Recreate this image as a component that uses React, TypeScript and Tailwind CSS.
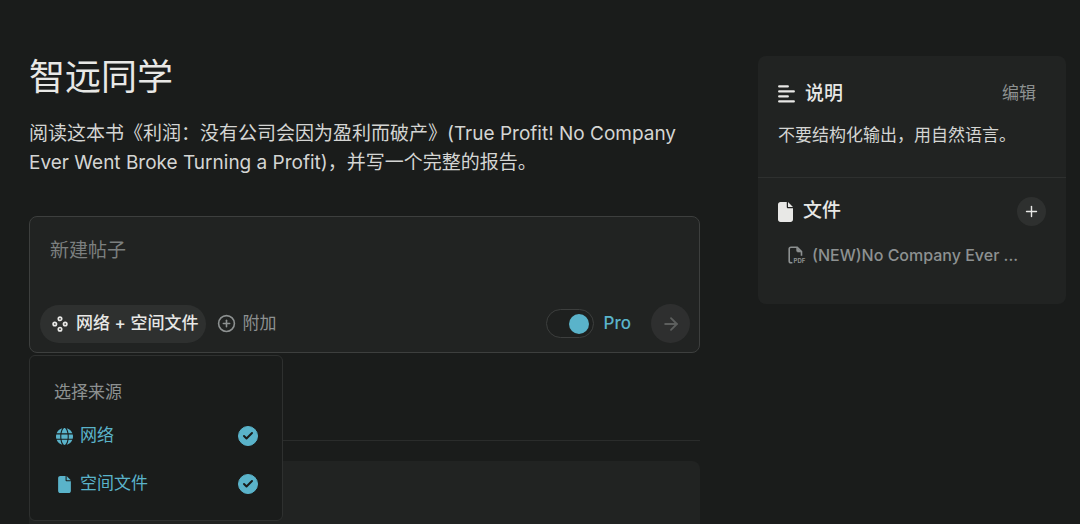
import React, { useState } from 'react';
import { ArrowRight, Check, CirclePlus, Plus } from 'lucide-react';
import { FaFile, FaGlobe } from 'react-icons/fa6';

interface Source {
  id: string;
  label: string;
  icon: React.ReactNode;
}

const SOURCES: Source[] = [
  { id: 'web', label: '网络', icon: <FaGlobe className="w-[17px] h-[17px]" /> },
  { id: 'files', label: '空间文件', icon: <FaFile className="w-[17px] h-[17px]" /> },
];

const FocusIcon: React.FC = () => (
  <svg className="w-4 h-4" viewBox="0 0 16 16" fill="none" stroke="currentColor" strokeWidth="1.7">
    <circle cx="8" cy="2.8" r="1.7" />
    <circle cx="2.8" cy="8" r="1.7" />
    <circle cx="13.2" cy="8" r="1.7" />
    <circle cx="8" cy="13.2" r="1.7" />
  </svg>
);

const LinesIcon: React.FC = () => (
  <svg className="w-[17px] h-[18px]" viewBox="0 0 17 18" fill="none" stroke="currentColor" strokeWidth="2.3" strokeLinecap="round">
    <path d="M1.2 1.4h8.6M1.2 6.4h14.6M1.2 11.4h8.6M1.2 16.4h14.6" />
  </svg>
);

const PdfIcon: React.FC = () => (
  <svg className="w-[18px] h-[18px] shrink-0" viewBox="0 0 18 18" fill="none" stroke="currentColor" strokeWidth="1.6">
    <path d="M4.4 16.7H3a1.8 1.8 0 0 1-1.8-1.8V3A1.8 1.8 0 0 1 3 1.2h6.2l4.3 4.3v4.2" />
    <path d="M8.6 1.4v3.2a1.4 1.4 0 0 0 1.4 1.4h3.2z" fill="currentColor" strokeWidth="0.6" />
    <text
      x="5.6"
      y="17.2"
      fontSize="6"
      fontWeight="700"
      fill="currentColor"
      stroke="none"
      fontFamily="Inter, sans-serif"
    >
      PDF
    </text>
  </svg>
);

const SourceOption: React.FC<{ source: Source; checked: boolean; onToggle: () => void }> = ({ source, checked, onToggle }) => (
  <label className="flex items-center h-12 pl-[26px] pr-6 gap-[7px] cursor-pointer text-[#5ab3ca]">
    {source.icon}
    <span className="flex-1 text-[17px]">{source.label}</span>
    <span className="grid place-items-center">
      <input
        type="checkbox"
        checked={checked}
        onChange={onToggle}
        className="col-start-1 row-start-1 appearance-none w-5 h-5 rounded-full border border-[#5ab3ca] checked:bg-[#5ab3ca]"
      />
      {checked && <Check className="col-start-1 row-start-1 w-3 h-3 text-[#1a1c1b] pointer-events-none" strokeWidth={4} />}
    </span>
  </label>
);

const Composer: React.FC = () => {
  const [pro, setPro] = useState(true);
  const [selected, setSelected] = useState<string[]>(['web', 'files']);

  const toggle = (id: string) =>
    setSelected((prev) => (prev.includes(id) ? prev.filter((s) => s !== id) : [...prev, id]));

  return (
    <div className="relative mt-[39px]">
      <div className="rounded-lg border border-[#3d3f3e] bg-[#212322] pt-5 pl-[10px] pr-[9px] pb-[9px]">
        <textarea
          aria-label="新建帖子"
          placeholder="新建帖子"
          rows={1}
          className="block w-full h-[67px] px-[10px] resize-none bg-transparent outline-none text-[19px] leading-7 text-[#e8e8e6] placeholder:text-[#7b7f7f]"
        />
        <div className="flex items-center">
          <button className="flex items-center gap-2 h-[38px] pl-3 pr-2 rounded-full bg-[#2e302f] text-[17px] font-medium text-[#e8e8e6]">
            <FocusIcon />
            网络 + 空间文件
          </button>
          <button className="flex items-center gap-[6px] ml-[11px] text-[17px] text-[#8d9191]">
            <CirclePlus className="w-[19px] h-[19px]" strokeWidth={2} />
            附加
          </button>
          <label className="flex items-center gap-[10px] ml-auto text-[17px] font-medium text-[#5ab3ca] cursor-pointer">
            <input
              type="checkbox"
              role="switch"
              checked={pro}
              onChange={() => setPro(!pro)}
              className="appearance-none flex items-center w-12 h-[29px] px-1 rounded-full border border-[#3d3f3e] bg-[#1e201f] before:block before:w-5 before:h-5 before:rounded-full before:bg-[#8d9191] checked:justify-end checked:before:bg-[#5ab3ca]"
            />
            Pro
          </label>
          <button aria-label="提交" className="grid place-items-center w-[39px] h-[39px] ml-5 rounded-full bg-[#2e2f2f] text-[#5d5f5e]">
            <ArrowRight className="w-5 h-5" strokeWidth={2.2} />
          </button>
        </div>
      </div>

      <div className="absolute left-0 top-full mt-[2px] w-[254px] pt-[23px] pb-3 rounded-md border border-[#2e302f] bg-[#1a1c1b]">
        <div className="px-6 pb-[7px] text-[17px] leading-[26px] text-[#8d9191]">选择来源</div>
        {SOURCES.map((source) => (
          <SourceOption
            key={source.id}
            source={source}
            checked={selected.includes(source.id)}
            onToggle={() => toggle(source.id)}
          />
        ))}
      </div>
    </div>
  );
};

const Sidebar: React.FC = () => (
  <aside className="w-[308px] shrink-0 self-start mt-14 rounded-lg bg-[#212322]">
    <section className="pt-6 pb-7 px-5 border-b border-[#2e302f]">
      <div className="flex items-center gap-[10px] h-7 text-[#e8e8e6]">
        <LinesIcon />
        <h2 className="flex-1 text-[19px] font-medium">说明</h2>
        <button className="mr-[10px] text-[17px] text-[#8d9191]">编辑</button>
      </div>
      <p className="mt-[14px] text-[17px] leading-[27px] text-[#d4d5d3]">不要结构化输出，用自然语言。</p>
    </section>
    <section className="pt-[19px] pb-[35px] px-5">
      <div className="flex items-center gap-[10px] text-[#e8e8e6]">
        <FaFile className="w-[15px] h-5" />
        <h2 className="flex-1 text-[19px] font-medium">文件</h2>
        <button aria-label="添加文件" className="grid place-items-center w-[29px] h-[29px] rounded-full bg-[#2e302f]">
          <Plus className="w-[17px] h-[17px]" strokeWidth={2} />
        </button>
      </div>
      <a href="#" className="flex items-center gap-[6px] mt-[15px] pl-[10px] text-base leading-7 font-medium text-[#8d9191]">
        <PdfIcon />
        <span className="whitespace-nowrap">(NEW)No Company Ever ...</span>
      </a>
    </section>
  </aside>
);

export default function App() {
  return (
    <div
      lang="zh-CN"
      className="flex gap-[58px] min-h-screen pl-[29px] pr-[14px] bg-[#1a1c1b] font-['Inter','Noto_Sans_CJK_SC',sans-serif]"
    >
      <main className="flex-1 min-w-0 flex flex-col pt-[51px]">
        <h1 className="text-[36px] leading-[52px] text-[#e8e8e6]">智远同学</h1>
        <p className="mt-4 text-[19px] leading-[29px] text-[#d4d5d3]">
          阅读这本书《利润：没有公司会因为盈利而破产》(True Profit! No Company Ever Went Broke Turning a Profit)，并写一个完整的报告。
        </p>
        <Composer />
        <hr className="mt-[87px] border-[#2a2c2b]" />
        <div className="flex-1 mt-5 rounded-t-lg bg-[#212322]" />
      </main>
      <Sidebar />
    </div>
  );
}
